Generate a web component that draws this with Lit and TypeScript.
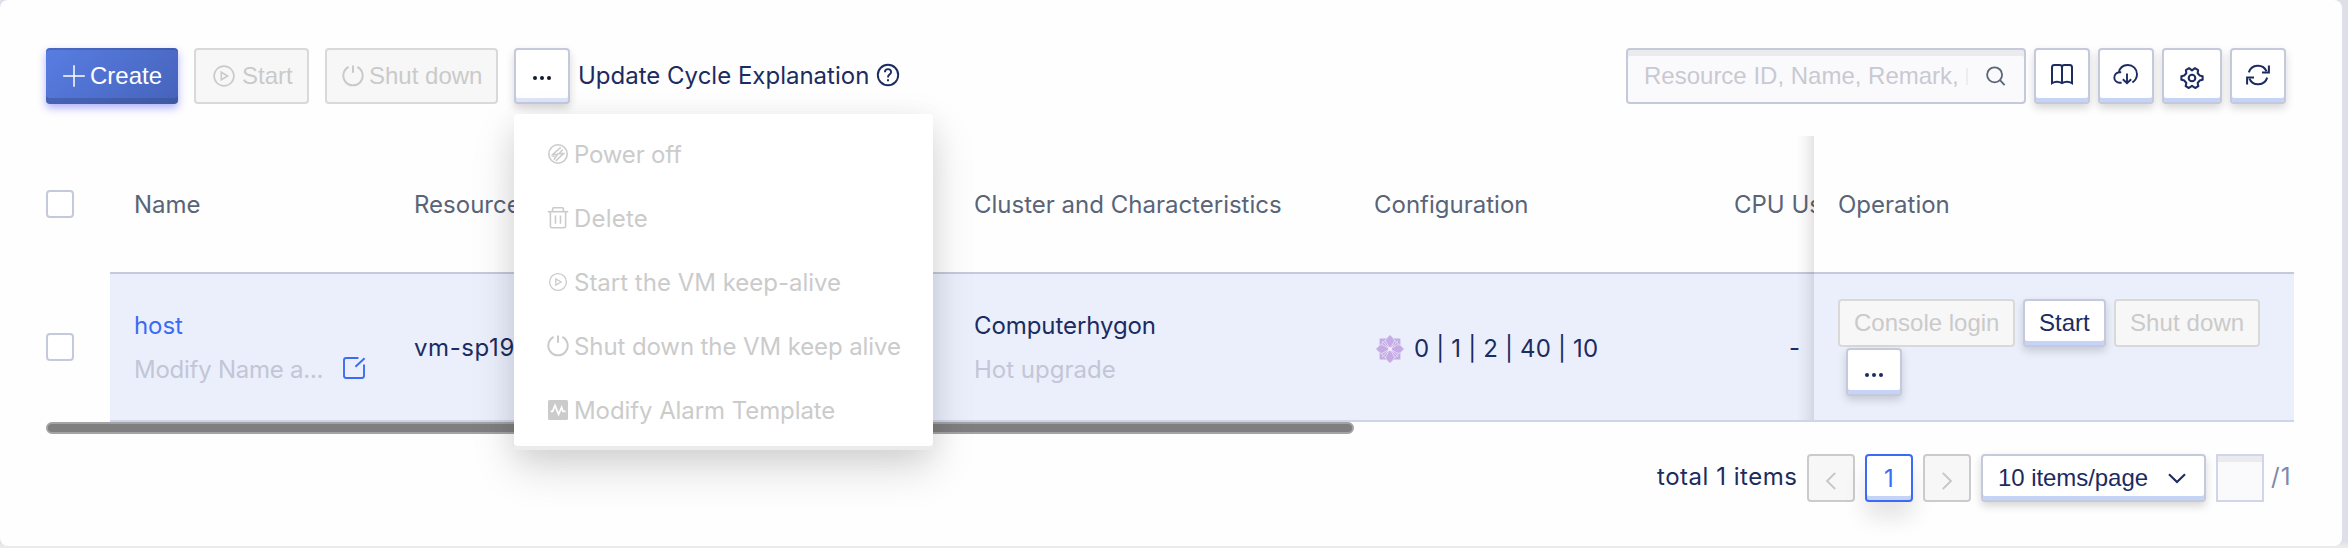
import { LitElement, html, svg, css } from 'lit';
import { customElement, state } from 'lit/decorators.js';

const icon = (body: unknown, size = 24, sw = 1.6) =>
  html`<svg width=${size} height=${size} viewBox="0 0 ${size} ${size}" fill="none" stroke="currentColor"
    stroke-width=${sw}>${body}</svg>`;

const icons = {
  plus: icon(svg`<path d="M12 1.2V22.8M1.2 12H22.8"/>`, 24, 1.5),
  play: icon(svg`<circle cx="12" cy="12" r="9.9"/><path d="M9.3 8.2V15.8L15.6 12Z"/>`, 24, 1.6),
  playSmall: icon(svg`<circle cx="12" cy="12" r="8.4"/><path d="M9.8 9V15L15 12Z"/>`, 24, 1.3),
  power: icon(svg`<path d="M7.6 3A9.7 9.7 0 1 0 16.4 3" /><path d="M12 1.5V8.8"/>`, 24, 2),
  powerOff: icon(svg`<circle cx="12" cy="12" r="9.2" stroke-width="1.6"/>
    <path d="M14.8 5.2L6.6 12.6H11.4L7.8 17.8M16.8 7.4L13.2 11.4H17.6L9.8 19" stroke-width="1.5"/>
    <path d="M5.6 14.2H9M11.2 11.6H17.6" stroke-width="1.3"/>`),
  trash: icon(svg`<path d="M1.8 5.7H22.2"/><path d="M6.6 5.2V3Q6.6 1.8 7.8 1.8H16.2Q17.4 1.8 17.4 3V5.2"/>
    <path d="M4.4 6V20.2Q4.4 21.8 6 21.8H18Q19.6 21.8 19.6 20.2V6"/><path d="M9.5 9.5V17.8M14.5 9.5V17.8"/>`, 24, 1.6),
  alarm: icon(svg`<rect x="2" y="2" width="20" height="20" rx="1.6" fill="currentColor" stroke="none"/>
    <path d="M4.6 13.4H6.6L9 7.6L12.6 16.4L15.6 9.4L17 13.4H19.6" stroke="#fff" stroke-width="1.7"/>`),
  help: icon(svg`<circle cx="12" cy="12" r="10.2" stroke-width="1.9"/>
    <path d="M8.9 9.2Q9 6.1 12 6.1T15.1 9Q15.1 10.5 13.4 11.6Q12 12.5 12 14.6"/>
    <path d="M12 16.2V18.2" stroke-width="2"/>`, 24, 1.9),
  search: icon(svg`<circle cx="10.6" cy="10.8" r="7.5"/><path d="M16 16.2L20.6 21.2"/>`, 24, 1.8),
  book: icon(svg`<path d="M14 6.4V21.8M14 6.4Q14 4 11.5 4H6.5Q4 4 4 6.4V22.2Q6.4 20.8 9 20.8T14 22.2Q16.4 20.8 19 20.8T24 22.2V6.4Q24 4 21.5 4H16.5Q14 4 14 6.4"/>`, 28, 2),
  cloud: icon(svg`<path d="M9.6 21.8H7.8A5.3 5.3 0 0 1 7.4 11.2H9.2M6.9 11.3C7.9 6.6 11.6 4 15.8 4C21 4 25 8 25 13.2C25 16.6 23.6 19.2 20.4 21.6"/>
    <path d="M15 12.4V22M10.8 18.2L15 22.2L19.2 18.2"/>`, 28, 1.9),
  gear: icon(svg`<path d="M14 6.4L17 4.2L20.1 6.1L19.7 9.2L21.6 11.4L24.6 12.2V15.8L21.6 16.6L19.7 19L20.3 22.2L17.2 24L14 21.8L10.8 24L7.7 22.2L8.3 19L6.4 16.6L3.4 15.8V12.2L6.4 11.4L8.3 9.2L7.9 6.1L11 4.2Z" stroke-linejoin="round"/>
    <circle cx="14" cy="14" r="3.3"/>`, 28, 2.1),
  refresh: icon(svg`<path d="M4.8 11.4A9.5 9.5 0 0 1 22.6 10.4M23.2 16.6A9.5 9.5 0 0 1 5.4 17.6"/>
    <path d="M24.9 4.6V11.6H18M3.1 23.4V16.4H10"/>`, 28, 2),
  dots: icon(svg`<g fill="currentColor" stroke="none"><circle cx="5" cy="12" r="2"/><circle cx="12" cy="12" r="2"/><circle cx="19" cy="12" r="2"/></g>`),
  edit: icon(svg`<path d="M16.4 2H4.2Q2 2 2 4.2V19.8Q2 22 4.2 22H19.8Q22 22 22 19.8V8.6M13.4 10.8L22.6 2.2"/>`, 24, 1.9),
  left: icon(svg`<path d="M16.2 4L8 12L16.2 20"/>`, 24, 1.8),
  right: icon(svg`<path d="M7.8 4L16 12L7.8 20"/>`, 24, 1.8),
  down: icon(svg`<path d="M4 8.2L12 16L20 8.2"/>`, 24, 2.1),
  snow: html`<svg width="28" height="28" viewBox="0 0 28 28">
    <path fill="#c5ace5" d="M14 0L17.5 3.6H24.4V10.5L28 14L24.4 17.5V24.4H17.5L14 28L10.5 24.4H3.6V17.5L0 14L3.6 10.5V3.6H10.5Z"/>
    <path stroke="#e6daf6" stroke-width=".9" fill="none" d="M6 6L22 22M22 6L6 22M11 3.6L3.6 11M17 3.6L24.4 11M11 24.4L3.6 17M17 24.4L24.4 17M9 5L19 23M19 5L9 23M5 9L23 19M5 19L23 9"/>
    <circle cx="14" cy="14" r="2" fill="#f3ecfb"/></svg>`,
};

@customElement('app-root')
class AppRoot extends LitElement {
  @state() menuOpen = true;

  menu = [
    [icons.powerOff, 'Power off', 'm1'],
    [icons.trash, 'Delete', 'm2'],
    [icons.playSmall, 'Start the VM keep-alive', ''],
    [icons.power, 'Shut down the VM keep alive', 'm4'],
    [icons.alarm, 'Modify Alarm Template', 'm5'],
  ] as const;

  static styles = css`
    :host { display: block; height: 548px; overflow: hidden; background: linear-gradient(#dedfe9 0 542px, #ebebeb 546px);
      font: 24px/44px Inter, sans-serif; color: #1c2b60; }
    * { box-sizing: border-box; }
    svg { flex: none; display: block; }
    .card { width: 2342px; height: 546px; background: #fefefe; border-radius: 8px; padding: 48px 48px 0 46px;
      display: flex; flex-direction: column; }
    .toolbar { display: flex; height: 56px; padding-right: 8px; }
    .btn { display: flex; align-items: center; height: 56px; border: 2px solid #c4c9db; border-radius: 4px; background: #fff;
      font-family: "Liberation Sans", Arial, sans-serif; padding: 0 16px; white-space: nowrap; }
    .raised { box-shadow: inset 0 -4px #c5d3f6, 0 4px 8px rgba(0,0,0,.16); }
    .off { background: #f7f7f7; border-color: #d9d9d9; color: #cacaca; }
    .create { width: 132px; gap: 4px; color: #fff; border: 0; padding: 0 0 0 16px;
      background: linear-gradient(135deg, #587de2, #4663bb);
      box-shadow: inset 0 2px rgba(40,60,120,.3), inset 0 -6px rgba(50,70,120,.36), 0 4px 8px rgba(70,70,255,.42); }
    .start { width: 115px; gap: 6px; margin-left: 16px; }
    .shut { width: 173px; gap: 4px; margin-left: 16px; padding-left: 14px; }
    .anchor { position: relative; margin-left: 16px; }
    .more { width: 56px; padding: 4px 0 0; justify-content: center; color: #111b2b;
      box-shadow: inset 0 -4px #dee4fa, 0 4px 8px rgba(0,0,0,.16); }
    .cycle { display: flex; align-items: center; gap: 7px; margin-left: 8px; height: 54px; }
    .cycle span { padding-top: 2px; }
    .grow { flex: 1; }
    .search { width: 400px; height: 56px; border: 2px solid #c4c9db; border-radius: 4px; background: #fafafd;
      box-shadow: inset 0 6px #ebebed; display: flex; align-items: center; padding-left: 16px;
      font-family: "Liberation Sans", Arial, sans-serif; color: #c9c9d2; }
    .search .ph { width: 322px; white-space: nowrap; }
    .search .sep { width: 2px; height: 17px; background: #ededf1; margin-right: 16px; }
    .search svg { color: #5b6679; }
    .ib { width: 56px; padding: 0 0 3px; justify-content: center; margin-left: 8px; }
    .gear { width: 60px; padding: 4px 0 0; }
    .menu { position: absolute; z-index: 5; left: 0; top: 66px; width: 419px; height: 336px; padding: 8px 0;
      background: #fff; border-radius: 4px; color: #cbcbcb;
      box-shadow: inset 0 -4px #ebebeb, 0 18px 44px rgba(0,0,0,.15), 0 6px 28px rgba(0,0,0,.06); }
    .item { display: flex; align-items: center; height: 64px; gap: 4px; padding-left: 32px; white-space: nowrap; }
    .item span { padding-top: 2px; }
    .m1 { letter-spacing: -.18px; } .m2 { letter-spacing: .2px; }
    .m4 { letter-spacing: -.1px; } .m5 { letter-spacing: -.08px; }
    .table { margin-top: 32px; }
    .tr { display: grid; grid-template-columns: 64px 280px 560px 400px 360px 104px 480px; }
    .th { height: 136px; align-items: center; color: #596478; }
    .td { height: 150px; }
    .cell { padding: 2px 0 0 24px; white-space: nowrap; overflow: hidden; }
    .td > .cell { border-top: 2px solid #c4c9db; border-bottom: 2px solid #cfd4e8; background: #ebeffc;
      display: flex; flex-direction: column; justify-content: center; }
    .td > .check { align-self: center; }
    .box { width: 28px; height: 28px; border: 2px solid #c4c9db; border-radius: 4px; background: #fff; }
    .fixed { position: relative; overflow: visible; align-self: stretch; }
    .th .fixed { display: flex; align-items: center; }
    .fixed::before { content: ""; position: absolute; right: 100%; top: 0; bottom: 0; width: 18px;
      background: linear-gradient(to left, rgba(0,0,0,.1), rgba(0,0,0,.035) 50%, rgba(0,0,0,0)); }
    .td .fixed { padding-top: 0; }
    .td .fixed::before { top: -2px; }
    .link { color: #3b6bf6; letter-spacing: -.1px; }
    .sub { color: #c2c6d6; }
    .edit { display: flex; align-items: center; }
    .edit .t { width: 208px; letter-spacing: -.25px; }
    .edit svg { color: #3b6bf6; margin-top: -4px; }
    .vm { letter-spacing: .6px; }
    .cl { letter-spacing: -.08px; }
    .conf { display: flex; align-items: center; gap: 10px; letter-spacing: .17px; padding: 2px 0 0 2px; }
    .dash { padding-left: 55px; }
    .ops { display: flex; flex-wrap: wrap; column-gap: 8px; row-gap: 1px; padding-top: 1px; }
    .ops .btn { height: 48px; }
    .w1 { width: 177px; padding-left: 14px; }
    .w2 { width: 83px; padding-left: 14px; }
    .w3 { width: 146px; padding-left: 14px; letter-spacing: .1px; }
    .dots { width: 56px; margin-left: 8px; padding: 5px 0 0; justify-content: center; }
    .bar { width: 1308px; height: 12px; border-radius: 6px; background: #7f7f7f; border: 2px solid #a3a3a3; }
    .pager { display: flex; height: 48px; margin-top: 20px; line-height: 44px; }
    .total { width: 150px; letter-spacing: .52px; margin-left: auto; padding-top: 1px; white-space: nowrap; }
    .pg { width: 48px; height: 48px; border: 2px solid #cbcbcb; border-radius: 4px; background: #f7f7f7; color: #c6c6c6;
      display: flex; align-items: center; justify-content: center; margin-right: 10px; padding-top: 1px; }
    .pg svg { margin-top: 5px; }
    .cur { border-color: #3b6bf6; background: #fff; color: #3b6bf6; box-shadow: inset 0 -4px #c5d3f6, 0 16px 22px rgba(0,0,0,.1); }
    .size { width: 225px; height: 48px; justify-content: space-between; padding: 0 15px; margin-right: 10px; letter-spacing: -.06px; }
    .jump { width: 48px; height: 48px; border: 2px solid #d0d5e9; background: #fafafd; box-shadow: inset 0 6px #ebebed; margin-right: 7px; }
    .of { width: 23px; padding-top: 1px; letter-spacing: 1px; color: #7d88a8; white-space: nowrap; }
  `;

  render() {
    return html`<div class="card">
      <div class="toolbar">
        <div class="btn create">${icons.plus}<span>Create</span></div>
        <div class="btn off start">${icons.play}<span>Start</span></div>
        <div class="btn off shut">${icons.power}<span>Shut down</span></div>
        <div class="anchor">
          <div class="btn more" @click=${() => (this.menuOpen = !this.menuOpen)}>${icons.dots}</div>
          ${this.menuOpen ? html`<div class="menu">${this.menu.map(([i, t, c]) =>
            html`<div class="item">${i}<span class=${c}>${t}</span></div>`)}</div>` : ''}
        </div>
        <div class="cycle"><span>Update Cycle Explanation</span>${icons.help}</div>
        <div class="grow"></div>
        <div class="search"><span class="ph">Resource ID, Name, Remark,</span><span class="sep"></span>${icons.search}</div>
        <div class="btn raised ib">${icons.book}</div>
        <div class="btn raised ib">${icons.cloud}</div>
        <div class="btn raised ib gear">${icons.gear}</div>
        <div class="btn raised ib">${icons.refresh}</div>
      </div>
      <div class="table">
        <div class="tr th">
          <div class="box"></div>
          <div class="cell">Name</div>
          <div class="cell">Resource ID</div>
          <div class="cell">Cluster and Characteristics</div>
          <div class="cell">Configuration</div>
          <div class="cell">CPU Usage</div>
          <div class="cell fixed">Operation</div>
        </div>
        <div class="tr td">
          <div class="box check"></div>
          <div class="cell">
            <div class="link">host</div>
            <div class="sub edit"><span class="t">Modify Name a...</span>${icons.edit}</div>
          </div>
          <div class="cell vm">vm-sp19</div>
          <div class="cell"><div class="cl">Computerhygon</div><div class="sub">Hot upgrade</div></div>
          <div class="cell"><div class="conf">${icons.snow}<span>0 | 1 | 2 | 40 | 10</span></div></div>
          <div class="cell"><div class="dash">-</div></div>
          <div class="cell fixed">
            <div class="ops">
              <div class="btn off w1">Console login</div>
              <div class="btn raised w2">Start</div>
              <div class="btn off w3">Shut down</div>
              <div class="btn raised dots">${icons.dots}</div>
            </div>
          </div>
        </div>
        <div class="bar"></div>
      </div>
      <div class="pager">
        <div class="total">total 1 items</div>
        <div class="pg">${icons.left}</div>
        <div class="pg cur">1</div>
        <div class="pg">${icons.right}</div>
        <div class="btn raised size"><span>10 items/page</span>${icons.down}</div>
        <div class="jump"></div>
        <div class="of">/1</div>
      </div>
    </div>`;
  }
}
